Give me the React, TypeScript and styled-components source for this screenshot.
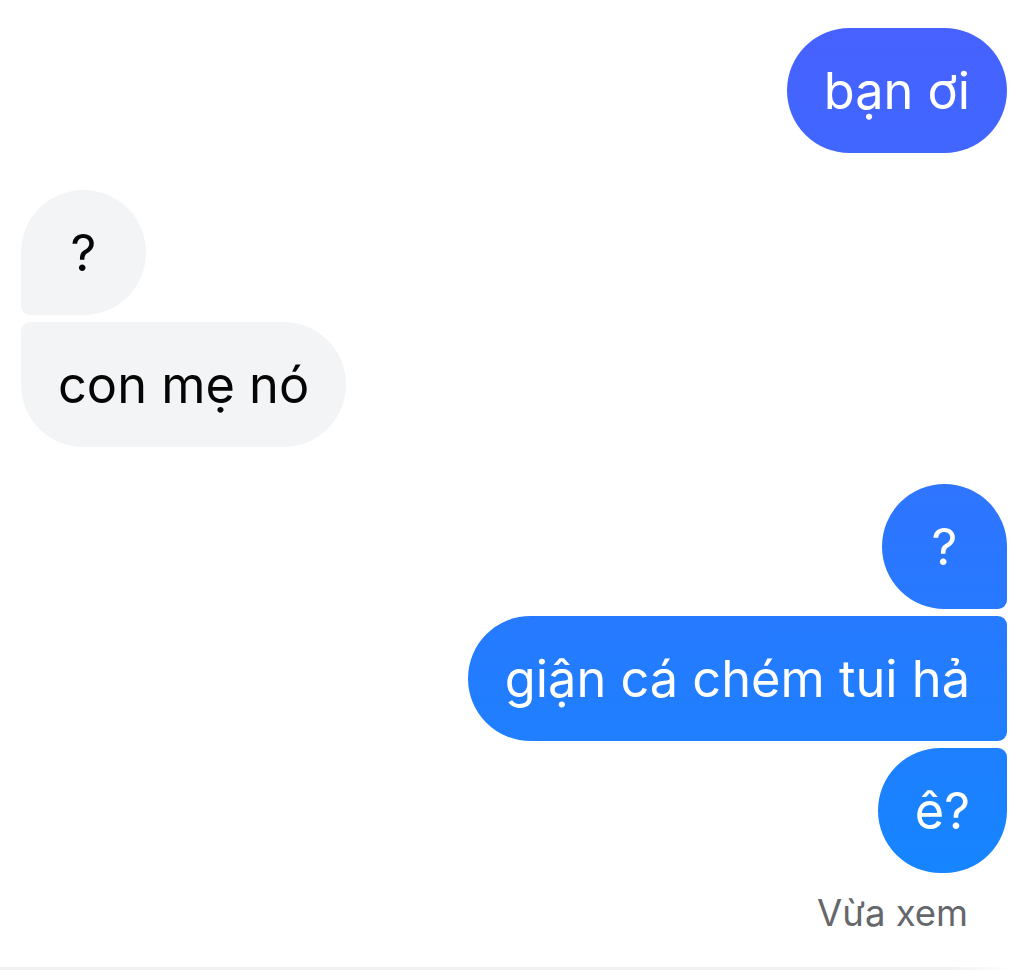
import React from "react";
import styled, { createGlobalStyle, css } from "styled-components";

const Global = createGlobalStyle`
  html, body { margin: 0; padding: 0; background: #ffffff; }
  body { font-family: Inter, "Noto Sans", "Liberation Sans", sans-serif; }
`;

const Screen = styled.div`
  width: 1032px;
  height: 970px;
  display: flex;
  flex-direction: column;
  box-sizing: border-box;
  overflow: hidden;
`;

const Thread = styled.div`
  flex: 1;
  display: flex;
  flex-direction: column;
  gap: 37px;
  padding: 28px 25px 0 21px;
`;

const Group = styled.div<{ $out?: boolean }>`
  display: flex;
  flex-direction: column;
  gap: 7px;
  align-items: ${(p) => (p.$out ? "flex-end" : "flex-start")};
`;

type Pos = "single" | "first" | "middle" | "last";

const BIG = "62.5px";
const SMALL = "9px";

function radius(out: boolean, pos: Pos) {
  const top = pos === "single" || pos === "first" ? BIG : SMALL;
  const bottom = pos === "single" || pos === "last" ? BIG : SMALL;
  return out
    ? `${BIG} ${top} ${bottom} ${BIG}`
    : `${top} ${BIG} ${BIG} ${bottom}`;
}

const Bubble = styled.div<{ $out?: boolean; $pos: Pos }>`
  box-sizing: border-box;
  min-width: 125px;
  padding: 33px 37px;
  font-size: 50.5px;
  line-height: 59px;
  text-align: center;
  white-space: nowrap;
  border-radius: ${(p) => radius(!!p.$out, p.$pos)};
  ${(p) =>
    p.$out
      ? css`
          color: #ffffff;
          background-image: linear-gradient(180deg, #4860ff 0px, #2e75ff 500px, #1089ff 970px);
          background-attachment: fixed;
        `
      : css`
          color: #050505;
          background: #f3f4f6;
        `}
`;

const Seen = styled.div`
  align-self: flex-end;
  margin: -17px 39px 0 0;
  font-size: 36.5px;
  line-height: 40px;
  color: #65676b;
`;

const Divider = styled.div`
  height: 3px;
  width: 98%;
  background: linear-gradient(90deg, #f1f1f3 0%, #f1f1f3 94%, rgba(241, 241, 243, 0) 100%);
`;

export default function App() {
  return (
    <>
      <Global />
      <Screen>
        <Thread>
          <Group $out>
            <Bubble $out $pos="single">bạn ơi</Bubble>
          </Group>
          <Group>
            <Bubble $pos="first">?</Bubble>
            <Bubble $pos="last">con mẹ nó</Bubble>
          </Group>
          <Group $out>
            <Bubble $out $pos="first">?</Bubble>
            <Bubble $out $pos="middle">giận cá chém tui hả</Bubble>
            <Bubble $out $pos="last">ê?</Bubble>
          </Group>
          <Seen>Vừa xem</Seen>
        </Thread>
        <Divider />
      </Screen>
    </>
  );
}
